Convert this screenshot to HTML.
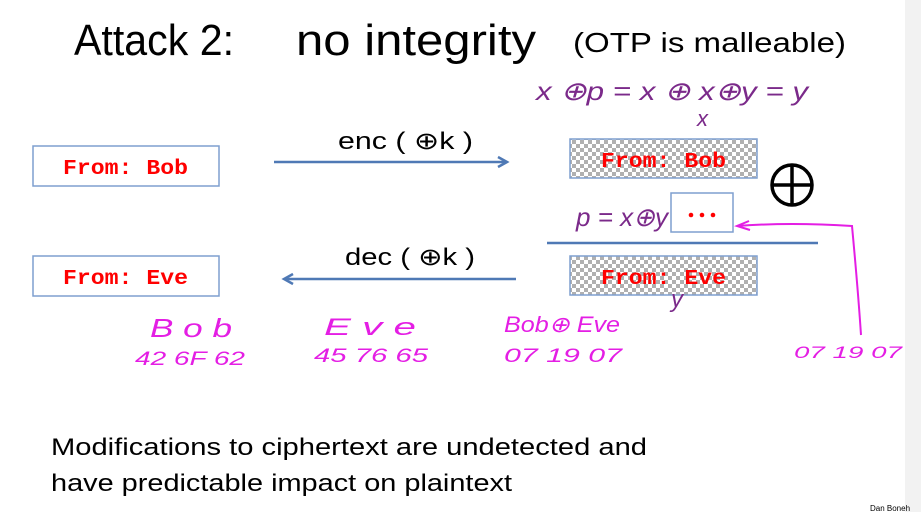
<!DOCTYPE html>
<html><head><meta charset="utf-8"><style>html,body{margin:0;padding:0;background:#fff}svg{display:block}</style></head>
<body>
<svg width="921" height="512" viewBox="0 0 921 512" xmlns="http://www.w3.org/2000/svg">
<defs>
<pattern id="chk" width="8" height="8" patternUnits="userSpaceOnUse">
<rect width="8" height="8" fill="#fff"/>
<rect width="4" height="4" fill="#b0b0b0"/><rect x="4" y="4" width="4" height="4" fill="#b0b0b0"/>
</pattern>
</defs>
<rect x="905" y="0" width="16" height="512" fill="#f2f2f2"/>
<g font-family="Liberation Sans, sans-serif" fill="#000">
<text x="74" y="55" font-size="44" textLength="160" lengthAdjust="spacingAndGlyphs">Attack 2:</text>
<text x="296" y="55" font-size="44" textLength="240" lengthAdjust="spacingAndGlyphs">no integrity</text>
<text x="573" y="52" font-size="28" textLength="273" lengthAdjust="spacingAndGlyphs">(OTP is malleable)</text>
<text x="338" y="149" font-size="24" textLength="135" lengthAdjust="spacingAndGlyphs">enc  ( ⊕k )</text>
<text x="345" y="265" font-size="24" textLength="130" lengthAdjust="spacingAndGlyphs">dec ( ⊕k )</text>
<text x="51" y="455" font-size="24" textLength="596" lengthAdjust="spacingAndGlyphs">Modifications to ciphertext are undetected and</text>
<text x="51" y="491" font-size="24" textLength="461" lengthAdjust="spacingAndGlyphs">have predictable impact on plaintext</text>
<text x="870" y="511" font-size="8">Dan Boneh</text>
</g>
<rect x="33" y="146" width="186" height="40" fill="#fff" stroke="#7f9fcf" stroke-width="1.5"/>
<rect x="33" y="256" width="186" height="40" fill="#fff" stroke="#7f9fcf" stroke-width="1.5"/>
<g font-family="Liberation Mono, monospace" font-weight="bold" font-size="21" fill="#f00">
<text x="63" y="174" textLength="125" lengthAdjust="spacingAndGlyphs">From: Bob</text>
<text x="63" y="284" textLength="125" lengthAdjust="spacingAndGlyphs">From: Eve</text>
</g>
<g stroke="#4f79b5" stroke-width="2.5" fill="none">
<line x1="274" y1="162" x2="506" y2="162"/><path d="M498 157 L507 162 L498 167"/>
<line x1="285" y1="279" x2="516" y2="279"/><path d="M293 274 L284 279 L293 284"/>
<line x1="547" y1="243" x2="818" y2="243"/>
</g>
<rect x="570" y="139" width="187" height="39" fill="url(#chk)" stroke="#7f9fcf" stroke-width="1.5"/>
<rect x="570" y="256" width="187" height="39" fill="url(#chk)" stroke="#7f9fcf" stroke-width="1.5"/>
<g font-family="Liberation Mono, monospace" font-weight="bold" font-size="21" fill="#f00">
<text x="601" y="167" textLength="125" lengthAdjust="spacingAndGlyphs">From: Bob</text>
<text x="601" y="284" textLength="125" lengthAdjust="spacingAndGlyphs">From: Eve</text>
</g>
<rect x="671" y="193" width="62" height="39" fill="#fff" stroke="#7f9fcf" stroke-width="1.5"/>
<g fill="#f00"><circle cx="691" cy="215" r="2.3"/><circle cx="702" cy="215" r="2.3"/><circle cx="713" cy="215" r="2.3"/></g>
<circle cx="792" cy="185" r="20" fill="none" stroke="#000" stroke-width="3.5"/>
<line x1="772" y1="185" x2="812" y2="185" stroke="#000" stroke-width="3.5"/>
<line x1="792" y1="165" x2="792" y2="205" stroke="#000" stroke-width="3.5"/>
<g font-family="Liberation Sans, sans-serif" font-style="italic" fill="#7b2a8a">
<text x="536" y="100" font-size="26" textLength="272" lengthAdjust="spacingAndGlyphs">x ⊕p = x ⊕ x⊕y = y</text>
<text x="697" y="126" font-size="22">x</text>
<text x="576" y="226" font-size="26" textLength="92" lengthAdjust="spacingAndGlyphs">p = x⊕y</text>
<text x="671" y="307" font-size="24">y</text>
</g>
<path d="M737 226 Q790 222 852 226 Q858 290 861 335" fill="none" stroke="#e41ee4" stroke-width="2"/>
<path d="M749 221 L737 226 L750 230" fill="none" stroke="#e41ee4" stroke-width="2"/>
<g font-family="Liberation Sans, sans-serif" font-style="italic" fill="#e41ee4">
<text x="150" y="337" font-size="26" textLength="82" lengthAdjust="spacingAndGlyphs">B o b</text>
<text x="135" y="365" font-size="19" textLength="110" lengthAdjust="spacingAndGlyphs">42 6F 62</text>
<text x="324" y="335" font-size="24" textLength="92" lengthAdjust="spacingAndGlyphs">E v e</text>
<text x="314" y="362" font-size="19" textLength="114" lengthAdjust="spacingAndGlyphs">45 76 65</text>
<text x="504" y="332" font-size="22" textLength="116" lengthAdjust="spacingAndGlyphs">Bob⊕ Eve</text>
<text x="504" y="362" font-size="19" textLength="118" lengthAdjust="spacingAndGlyphs">07 19 07</text>
<text x="794" y="358" font-size="17" textLength="108" lengthAdjust="spacingAndGlyphs">07 19 07</text>
</g>
</svg>
</body></html>
